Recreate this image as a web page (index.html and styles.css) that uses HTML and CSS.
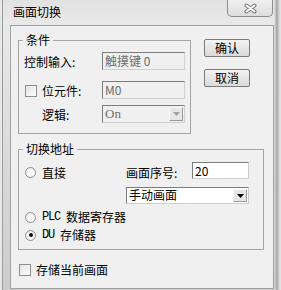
FILE: index.html
```html
<!DOCTYPE html>
<html lang="zh-CN">
<head>
  <meta charset="UTF-8">
  <title>画面切换</title>
  <link rel="stylesheet" href="styles.css">
</head>
<body>
  <div class="window">
    <div class="titlebar">
      <span class="title">画面切换</span>
      <button class="close">
        <svg width="15" height="11" viewBox="0 0 15 11">
          <path d="M3.5 2.5 L11.5 8.5 M11.5 2.5 L3.5 8.5" stroke="#7d7d7d" stroke-width="4" stroke-linecap="round"/>
          <path d="M3.5 2.5 L11.5 8.5 M11.5 2.5 L3.5 8.5" stroke="#fff" stroke-width="2" stroke-linecap="round"/>
        </svg>
      </button>
    </div>

    <div class="client">
      <div class="top">
        <fieldset class="group cond">
          <legend>条件</legend>
          <div class="cond-body">
            <div class="row">
              <span class="lbl">控制输入:</span>
              <div class="field disabled">触摸键 0</div>
            </div>
            <div class="row row-bit">
              <span class="lbl"><span class="box"></span>位元件:</span>
              <div class="field disabled">M0</div>
            </div>
            <div class="row row-logic">
              <span class="lbl indent">逻辑:</span>
              <div class="combo disabled">
                <span class="combo-text serif">On</span>
                <span class="drop"><svg width="7" height="4" viewBox="0 0 7 4"><polygon points="0,0 7,0 3.5,4" fill="#a0a0a0"/></svg></span>
              </div>
            </div>
          </div>
        </fieldset>

        <div class="buttons">
          <button class="btn">确认</button>
          <button class="btn">取消</button>
        </div>
      </div>

      <fieldset class="group addr">
        <legend>切换地址</legend>
        <div class="addr-body">
          <div class="addr-head">
            <div class="opt opt-direct"><span class="radio"></span>直接</div>
            <div class="addr-right">
              <div class="seq">
                <span class="seq-lbl">画面序号:</span>
                <div class="field num">20</div>
              </div>
              <div class="combo big">
                <span class="combo-text">手动画面</span>
                <span class="drop"><svg width="7" height="4" viewBox="0 0 7 4"><polygon points="0,0 7,0 3.5,4" fill="#000"/></svg></span>
              </div>
            </div>
          </div>
          <div class="opt opt-plc"><span class="radio"></span><span class="mono">PLC </span>数据寄存器</div>
          <div class="opt opt-du"><span class="radio checked"></span><span class="mono">DU </span>存储器</div>
        </div>
      </fieldset>

      <div class="store"><span class="box"></span>存储当前画面</div>
    </div>
  </div>
</body>
</html>
```

FILE: styles.css
```css
* {
  box-sizing: border-box;
}

body {
  margin: 0;
  background: #e8e8e8;
  font-family: "Noto Sans CJK SC", sans-serif;
  font-size: 12px;
  color: #000;
  overflow: hidden;
}

.window {
  width: 279px;
  height: 290px;
  margin-left: 2px;
  padding: 0 7px 0 7px;
  border-left: 1px solid #9c9c9c;
  display: flex;
  flex-direction: column;
  background:
    linear-gradient(to right, transparent 271px, #cfcfcf 272px, #a4a4a4 274px, #d6d6d6 276px, #e4e4e4 278px),
    linear-gradient(#e2e2e2, #e9e9e9 25px, #d8d8d8 60%, #cccccc);
}

.titlebar {
  height: 25px;
  display: flex;
  justify-content: space-between;
  align-items: flex-start;
}

.title {
  padding: 4px 0 0 3px;
  line-height: 16px;
}

.close {
  width: 46px;
  height: 17px;
  margin-right: 1px;
  padding: 0;
  border: 1px solid #8c8c8c;
  border-top: 0;
  border-radius: 0 0 5px 5px;
  background: linear-gradient(#efefef, #dddddd);
  display: flex;
  align-items: center;
  justify-content: center;
}

.client {
  height: 264px;
  border: 1px solid #a2a2a2;
  background: #f0f0f0;
  padding: 7px 0 0 7px;
}

.top {
  display: flex;
  align-items: flex-start;
}

.group {
  margin: 0;
  padding: 0;
  border: 1px solid #a5a5a5;
  min-width: 0;
}

.group legend {
  margin-left: 4px;
  padding: 0 3px;
  line-height: 14px;
}

.cond {
  width: 173px;
}

.cond-body {
  padding: 5px 0 10px 5px;
}

.row {
  display: flex;
  align-items: center;
  height: 18px;
}

.row-bit {
  margin-top: 11px;
}

.row-logic {
  margin-top: 6px;
}

.lbl {
  width: 78px;
  display: flex;
  align-items: center;
  line-height: 14px;
  padding-top: 2px;
}

.indent {
  padding-left: 18px;
}

.box {
  width: 12px;
  height: 12px;
  margin: 0 5px 0 1px;
  border: 1px solid #8e8e8e;
  background: linear-gradient(135deg, #e4e4e4, #fdfdfd);
  flex: none;
}

.field {
  width: 83px;
  height: 18px;
  padding: 0 2px;
  border: 1px solid;
  border-color: #7c7c7c #cfcfcf #cfcfcf #7c7c7c;
  line-height: 15px;
  background: #f0f0f0;
}

.disabled {
  color: #6d6d6d;
}

.combo {
  width: 83px;
  height: 18px;
  display: flex;
  align-items: stretch;
  border: 1px solid;
  border-color: #7c7c7c #cfcfcf #cfcfcf #7c7c7c;
  background: #f0f0f0;
}

.combo-text {
  flex: 1;
  padding: 0 2px;
  line-height: 15px;
}

.serif {
  font-family: "Liberation Serif", serif;
  font-size: 13px;
}

.drop {
  width: 14px;
  margin: 1px;
  border: 1px solid;
  border-color: #f8f8f8 #9a9a9a #9a9a9a #f8f8f8;
  background: #e6e6e6;
  display: flex;
  align-items: center;
  justify-content: center;
}

.buttons {
  margin: 6px 0 0 13px;
  display: flex;
  flex-direction: column;
  gap: 12px;
}

.btn {
  width: 46px;
  height: 18px;
  padding: 0;
  border: 1px solid #7a7a7a;
  border-radius: 2px;
  background: linear-gradient(#f4f4f4, #e6e6e6 50%, #dadada);
  font-family: inherit;
  font-size: 12px;
  line-height: 14px;
  color: #000;
}

.addr {
  width: 246px;
  margin-top: 8px;
}

.addr-body {
  padding: 6px 0 7px 6px;
}

.addr-head {
  display: flex;
}

.opt {
  display: flex;
  align-items: center;
  height: 14px;
  line-height: 14px;
}

.opt-direct {
  width: 101px;
  height: 17px;
  margin-top: 2px;
}

.opt-plc {
  margin-top: 6px;
}

.opt-du {
  margin-top: 4px;
}

.radio {
  width: 11px;
  height: 11px;
  margin-right: 6px;
  border: 1px solid #929292;
  border-radius: 50%;
  background: radial-gradient(circle at 60% 60%, #ffffff 30%, #dcdcdc);
  flex: none;
  display: flex;
  align-items: center;
  justify-content: center;
}

.radio.checked::after {
  content: "";
  width: 4px;
  height: 4px;
  border-radius: 50%;
  background: #111;
}

.mono {
  font-family: "Liberation Mono", monospace;
  font-size: 12px;
  letter-spacing: -1.2px;
  white-space: pre;
}

.addr-right {
  display: flex;
  flex-direction: column;
}

.seq {
  display: flex;
  align-items: center;
  height: 17px;
}

.seq-lbl {
  width: 66px;
  padding-top: 4px;
  line-height: 14px;
}

.num {
  width: 57px;
  height: 17px;
  background: #fff;
}

.big {
  width: 123px;
  height: 17px;
  margin-top: 8px;
  background: #fff;
}

.big .combo-text {
  line-height: 14px;
}

.store {
  display: flex;
  align-items: center;
  height: 14px;
  margin-top: 13px;
  line-height: 14px;
}

.store .box {
  margin: 0 5px 0 1px;
}
```
